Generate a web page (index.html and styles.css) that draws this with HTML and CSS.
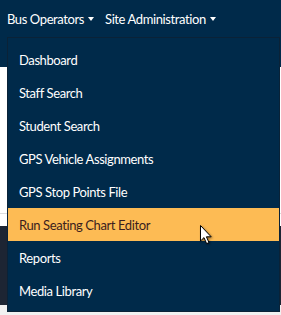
FILE: index.html
```html
<!DOCTYPE html>
<html>
<head>
<meta charset="utf-8">
<link rel="stylesheet" href="styles.css">
</head>
<body>
<header class="navbar">
  <nav class="nav">
    <span class="nav-link">Bus Operators <span class="caret"></span></span>
    <span class="nav-link">Site Administration <span class="caret"></span></span>
  </nav>
</header>
<main class="page">
  <div class="white-area"><div class="rule"></div></div>
  <div class="dark-area"></div>
  <div class="footer-strip"></div>
</main>
<ul class="dropdown">
  <li class="item">Dashboard</li>
  <li class="item">Staff Search</li>
  <li class="item">Student Search</li>
  <li class="item">GPS Vehicle Assignments</li>
  <li class="item">GPS Stop Points File</li>
  <li class="item active">Run Seating Chart Editor</li>
  <li class="item">Reports</li>
  <li class="item">Media Library</li>
</ul>
<svg class="cursor" width="14" height="22" viewBox="0 0 14 22">
  <path d="M1.5 1.5 L1.5 17 L5 13.6 L7.6 19.6 L10 18.6 L7.4 12.8 L12.2 12.8 Z" fill="#fff" stroke="#000" stroke-width="1" stroke-linejoin="round"/>
</svg>
</body>
</html>
```
FILE: styles.css
```css
html, body {
  margin: 0;
  padding: 0;
}
body {
  width: 281px;
  height: 315px;
  overflow: hidden;
  position: relative;
  background: #ffffff;
  font-family: "Lato", "Open Sans", sans-serif;
}
.navbar {
  height: 67px;
  background: #002a4a;
}
.nav {
  display: flex;
  height: 38px;
  align-items: center;
  padding-left: 7px;
  gap: 11px;
}
.nav-link {
  color: #ffffff;
  font-size: 13px;
  letter-spacing: -0.4px;
  display: flex;
  align-items: center;
  gap: 2px;
  white-space: nowrap;
}
.caret {
  width: 0;
  height: 0;
  border-left: 3.5px solid transparent;
  border-right: 3.5px solid transparent;
  border-top: 4px solid #ffffff;
  margin-left: 2px;
}
.page {
  display: flex;
  flex-direction: column;
}
.white-area {
  height: 159px;
  background: #ffffff;
  position: relative;
}
.rule {
  margin-top: 146px;
  height: 1px;
  background: #dcdcdc;
}
.dark-area {
  height: 79px;
  background: #1d2533;
}
.footer-strip {
  height: 10px;
  background: #f1f1f1;
}
.dropdown {
  position: absolute;
  left: 7px;
  top: 37px;
  width: 273px;
  margin: 0;
  padding: 5px 0 5px;
  list-style: none;
  background: #002a4a;
  border: 1px solid #0a2237;
  box-sizing: border-box;
  height: 275px;
}
.item {
  height: 33px;
  display: flex;
  align-items: center;
  padding-left: 11px;
  color: #ffffff;
  font-size: 13px;
  letter-spacing: -0.4px;
  white-space: nowrap;
}
.item.active {
  background: #fdbb54;
  color: #3b1e1e;
}
.cursor {
  position: absolute;
  left: 199px;
  top: 224px;
  filter: drop-shadow(1px 1px 1px rgba(0,0,0,0.45));
}
```
